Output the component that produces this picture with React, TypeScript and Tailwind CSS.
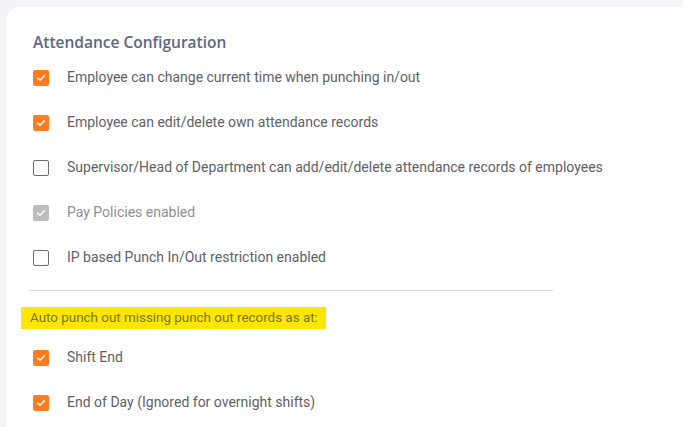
import React from "react";

type Item = { label: string; state: "on" | "off" | "disabled" };

const general: Item[] = [
  { label: "Employee can change current time when punching in/out", state: "on" },
  { label: "Employee can edit/delete own attendance records", state: "on" },
  { label: "Supervisor/Head of Department can add/edit/delete attendance records of employees", state: "off" },
  { label: "Pay Policies enabled", state: "disabled" },
  { label: "IP based Punch In/Out restriction enabled", state: "off" },
];

const autoPunch: Item[] = [
  { label: "Shift End", state: "on" },
  { label: "End of Day (Ignored for overnight shifts)", state: "on" },
];

function Check({ state }: { state: Item["state"] }) {
  if (state === "off") {
    return <span className="w-4 h-4 shrink-0 rounded-[2px] border border-[#6f6f6f] bg-white" />;
  }
  return (
    <span
      className={
        "w-4 h-4 shrink-0 rounded-[2px] flex items-center justify-center " +
        (state === "on" ? "bg-[#ff7b1d]" : "bg-[#bdbdbd]")
      }
    >
      <svg viewBox="0 0 16 16" className="w-3 h-3" fill="none" stroke="white" strokeWidth="2" strokeLinecap="round" strokeLinejoin="round">
        <path d="M3.5 8.2 L6.6 11 L12.5 5" />
      </svg>
    </span>
  );
}

function Row({ item }: { item: Item }) {
  return (
    <label className="flex items-center h-[45px] gap-[18px]">
      <Check state={item.state} />
      <span
        className={
          "text-[14px] " + (item.state === "disabled" ? "text-[#8f8f94]" : "text-[#605f66]")
        }
      >
        {item.label}
      </span>
    </label>
  );
}

export default function App() {
  return (
    <div className="w-[683px] h-[427px] overflow-hidden bg-[#f4f4f8] pt-[7px] pl-[6px]" style={{ fontFamily: "Roboto, 'Liberation Sans', sans-serif" }}>
      <div className="bg-white rounded-tl-[14px] h-full pl-[27px] pt-[25px]">
        <h2 className="text-[15.5px] font-semibold text-[#5b6883] leading-5 mb-[3px]" style={{ fontFamily: "'Open Sans', sans-serif" }}>
          Attendance Configuration
        </h2>
        <div className="flex flex-col">
          {general.map((it) => (
            <Row key={it.label} item={it} />
          ))}
        </div>
        <div className="w-[524px] -ml-[4px] border-t border-[#d6d6d6] mt-[10px]" />
        <div className="-ml-[12px] mt-[16px] w-[305px] h-[22px] bg-[#ffe600] flex items-center pl-[9px] whitespace-nowrap text-[13.4px] text-[#76761a]">
          Auto punch out missing punch out records as at:
        </div>
        <div className="flex flex-col mt-[6px]">
          {autoPunch.map((it) => (
            <Row key={it.label} item={it} />
          ))}
        </div>
      </div>
    </div>
  );
}
